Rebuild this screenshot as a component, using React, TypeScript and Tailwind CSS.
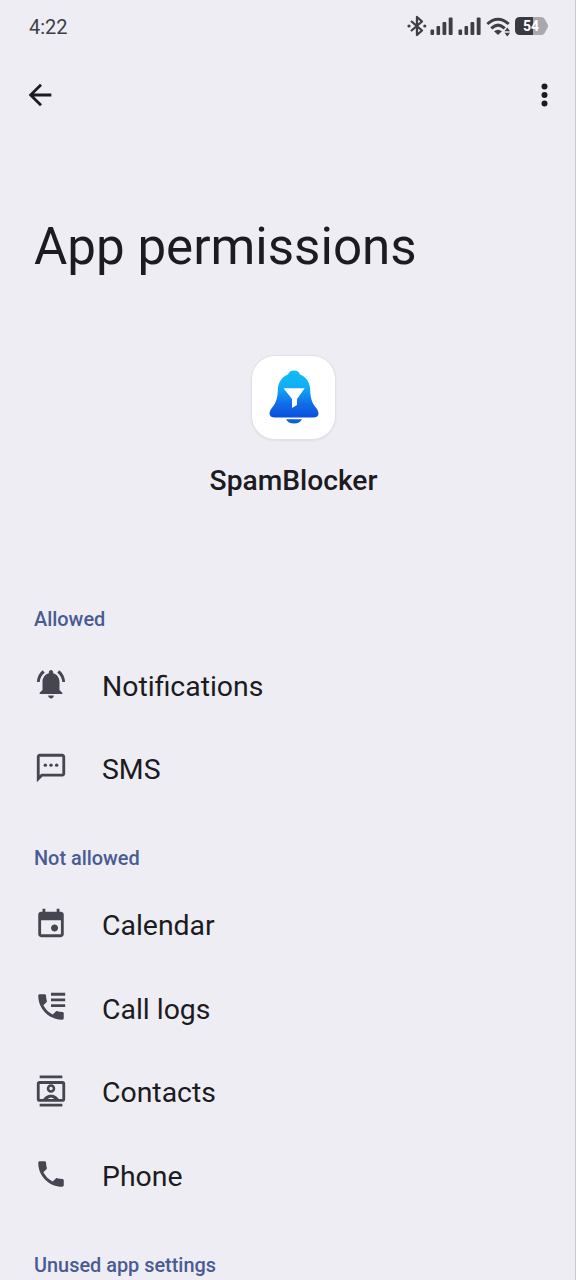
import type { ReactNode } from "react";

const phonePath =
  "M6.620 10.790c1.440 2.830 3.760 5.140 6.590 6.590l2.200-2.200c.27-.27.67-.36 1.020-.24 1.120.37 2.330.57 3.570.57.55 0 1 .45 1 1V20c0 .55-.45 1-1 1-9.390 0-17-7.610-17-17 0-.55.45-1 1-1h3.500c.55 0 1 .45 1 1 0 1.250.2 2.450.57 3.570.11.35.03.74-.25 1.020l-2.200 2.200z";

const icons: Record<string, ReactNode> = {
  Notifications: (
    <path d="M7.580 4.080L6.150 2.350C3.750 4.180 2.170 7.300 2.030 10.500h2c.15-2.650 1.510-4.970 3.550-6.420zM19.970 10.500h2c-.15-3.200-1.730-6.320-4.120-8.150l-1.420 1.730c2.020 1.450 3.390 3.770 3.540 6.420zM18 10.800c0-3.070-1.640-5.640-4.500-6.320V3.700c0-.83-.67-1.600-1.500-1.600s-1.500.77-1.500 1.600v.78C7.630 5.160 6 7.720 6 10.800v5.400l-2 2v.9h16v-.9l-2-2v-5.400zM12 22.200c.14 0 .27-.01.4-.04.65-.14 1.180-.58 1.440-1.180.1-.24.15-.5.15-.78h-4c.01 1.100.9 2 2.010 2z" />
  ),
  SMS: (
    <>
      <path d="M2 22V4q0-.825.588-1.412T4 2h16q.825 0 1.413.588T22 4v12q0 .825-.587 1.413T20 18H6l-4 4Zm2-4.825L5.175 16H20V4H4v13.175Z" />
      <circle cx="8" cy="10" r="1.2" />
      <circle cx="12" cy="10" r="1.2" />
      <circle cx="16" cy="10" r="1.2" />
    </>
  ),
  Calendar: (
    <path d="M14.500 18q-1.050 0-1.775-.725T12 15.500t.725-1.775T14.500 13t1.775.725T17 15.500t-.725 1.775T14.500 18ZM5 22q-.825 0-1.412-.587T3 20V6q0-.825.588-1.412T5 4h1V2h2v2h8V2h2v2h1q.825 0 1.413.588T21 6v14q0 .825-.587 1.413T19 22H5Zm0-2h14V10H5v10Z" />
  ),
  "Call logs": (
    <>
      <path d={phonePath} />
      <path d="M12 2H22v2H12zM12 6H22v2H12zM12 10H22v2H12z" />
    </>
  ),
  Contacts: (
    <>
      <path d="M4 1h16v2H4zM4 21h16v2H4z" />
      <rect x="3" y="6" width="18" height="12.600" rx="1" fill="none" stroke="#45464f" strokeWidth="2" />
      <circle cx="12" cy="10.200" r="2.100" fill="none" stroke="#45464f" strokeWidth="1.800" />
      <path d="M6 18.500C7.500 15.600 9.700 14.600 12 14.600S16.500 15.600 18 18.500H15Q13.700 16.600 12 16.600T9 18.500Z" />
    </>
  ),
  Phone: <path d={phonePath} />,
};

function Row({ label }: { label: string }) {
  return (
    <li className="flex h-[83.6px] items-center pl-[34px]">
      <svg viewBox="0 0 24 24" className="-mt-[5px] size-[34px] shrink-0 fill-[#45464f]">
        {icons[label]}
      </svg>
      <span className="ml-[34px] text-[28.4px] leading-[40px]">{label}</span>
    </li>
  );
}

function SectionTitle({ children }: { children: ReactNode }) {
  return (
    <h2 className="pl-[34px] text-[19.9px] leading-[28px] font-medium text-[#4a5b92]">{children}</h2>
  );
}

function Signal() {
  return (
    <svg viewBox="0 0 23 18" className="h-[18px] w-[23px] fill-[#3f3e45]">
      <rect x="0.5" y="12.500" width="3.600" height="5.500" rx="1" />
      <rect x="6.500" y="9" width="3.600" height="9" rx="1" />
      <rect x="12.500" y="5" width="3.800" height="13" rx="1" />
      <rect x="18.700" y="0.500" width="3.900" height="17.500" rx="1" />
    </svg>
  );
}

function StatusBar() {
  return (
    <div className="flex h-[53px] items-center pr-[26px] pl-[29px] text-[#3f3e45]">
      <span className="text-[20px] leading-6">4:22</span>
      <div className="ml-auto flex items-center">
        <svg viewBox="0 0 20 22" className="-mt-0.5 h-[22px] w-5" fill="none" stroke="currentColor" strokeWidth="2.300">
          <path d="M4 6 L15 15.500 L10 20 V2 L15 6.500 L4 16" strokeLinejoin="round" />
          <circle cx="2" cy="11" r="1.600" fill="currentColor" stroke="none" />
          <circle cx="17.800" cy="11" r="1.600" fill="currentColor" stroke="none" />
        </svg>
        <div className="-mt-px ml-[3px] flex gap-[5px]">
          <Signal />
          <Signal />
        </div>
        <svg viewBox="0 0 26 20" className="ml-[5px] h-5 w-[26px]" fill="none" stroke="currentColor">
          <path d="M1.300 7 Q12 -2.500 22.700 7" strokeWidth="3" />
          <path d="M5.300 11.300 Q12 5 18.700 11.300" strokeWidth="3" />
          <path d="M8 14.300 Q12 11 16 14.300 L12 18Z" fill="currentColor" stroke="none" />
          <path d="M18.500 14.300 L21.300 10.500 L24.100 14.300ZM18.500 15.800 L21.300 19.500 L24.100 15.800Z" fill="currentColor" stroke="none" />
        </svg>
        <div className="relative -mt-px ml-[3px] h-[18px] w-[34px]">
          <svg viewBox="0 0 34 18" className="h-[18px] w-[34px]">
            <path d="M18 0H26.500Q28.500 0 29.500 1.800L32.700 7.500Q33.400 9 32.700 10.500L29.500 16.200Q28.500 18 26.500 18H18Z" fill="#a9a8ae" />
            <path d="M18 0H5Q0 0 0 5V13Q0 18 5 18H18Z" fill="#3a393f" />
          </svg>
          <span className="absolute top-0 left-[8px] text-[14px] leading-[18px] font-bold text-white">54</span>
        </div>
      </div>
    </div>
  );
}

function BellFilter() {
  return (
    <svg viewBox="0 0 50 56" className="ml-px h-[56px] w-[50px]">
      <defs>
        <linearGradient id="bell" x1="0" y1="0" x2="0" y2="1">
          <stop offset="0" stopColor="#10bdf3" />
          <stop offset="0.35" stopColor="#10aef5" />
          <stop offset="0.72" stopColor="#106bea" />
          <stop offset="1" stopColor="#0a4fdb" />
        </linearGradient>
      </defs>
      <path
        d="M25 .5C28 .5 30.200 2.100 31 4.500C37 7 40.500 12 41 18C41.500 27 42 31 46 36.500C48 39 49.500 41 49.500 43.500Q49.500 47.500 44 47.500H6Q.5 47.500 .5 43.500C.5 41 2 39 4 36.500C8 31 8.500 27 9 18C9.500 12 13 7 19 4.500C19.800 2.100 22 .5 25 .5Z"
        fill="url(#bell)"
      />
      <path d="M17 49.300H33Q31 53.500 25 53.500T17 49.300Z" fill="#0b62dd" />
      <path d="M14.500 18.200H35.700L28 29V35L23 38V29Z" fill="white" />
    </svg>
  );
}

export default function App() {
  return (
    <div className="flex h-[1280px] w-[576px] flex-col overflow-hidden border-r border-[#c9c8ce] bg-[#eeedf4] font-['Roboto',sans-serif] text-[#1b1b21]">
      <StatusBar />
      <header className="flex h-[84px] items-center justify-between pr-[13px] pl-[23px]">
        <svg viewBox="0 0 24 24" className="size-[34px] fill-current">
          <path d="m7.825 13l5.600 5.600L12 20l-8-8l8-8l1.425 1.400l-5.600 5.600H20v2H7.825Z" />
        </svg>
        <svg viewBox="0 0 34 34" className="size-[34px] fill-current">
          <circle cx="16.500" cy="8.500" r="3" />
          <circle cx="16.500" cy="17" r="3" />
          <circle cx="16.500" cy="25.500" r="3" />
        </svg>
      </header>
      <h1 className="mt-[80px] pl-[34px] text-[51.1px] leading-[60px]">App permissions</h1>
      <section className="mt-[78px] flex flex-col items-center pl-[11px]">
        <div className="flex size-[85px] items-center justify-center rounded-[24px] border border-[#e2e1e8] bg-white shadow-sm shadow-black/5">
          <BellFilter />
        </div>
        <p className="mt-[21px] ml-px text-[28.200px] leading-[40px] font-medium">SpamBlocker</p>
      </section>
      <main className="mt-[105px]">
        <SectionTitle>Allowed</SectionTitle>
        <ul className="mt-[11px]">
          <Row label="Notifications" />
          <Row label="SMS" />
        </ul>
        <div className="mt-[33px]">
          <SectionTitle>Not allowed</SectionTitle>
        </div>
        <ul className="mt-[11px]">
          <Row label="Calendar" />
          <Row label="Call logs" />
          <Row label="Contacts" />
          <Row label="Phone" />
        </ul>
        <div className="mt-[33px]">
          <SectionTitle>Unused app settings</SectionTitle>
        </div>
      </main>
    </div>
  );
}
